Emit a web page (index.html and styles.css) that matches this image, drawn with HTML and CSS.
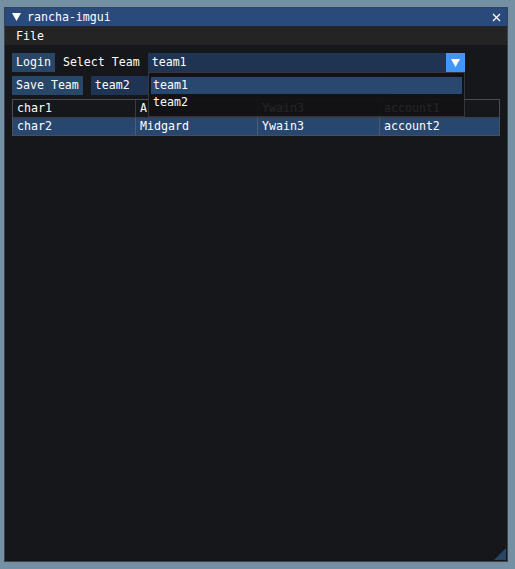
FILE: index.html
```html
<!DOCTYPE html>
<html>
<head>
<meta charset="utf-8">
<link rel="stylesheet" href="styles.css">
</head>
<body>
<div class="window">
  <div class="titlebar">
    <svg class="collapse" width="9" height="8" viewBox="0 0 9 8"><polygon points="0,0 9,0 4.5,8" fill="#fff"/></svg>
    <span class="title">rancha-imgui</span>
    <svg class="close" width="9" height="9" viewBox="0 0 9 9"><path d="M1 1 L8 8 M8 1 L1 8" stroke="#fff" stroke-width="1.3"/></svg>
  </div>
  <div class="menubar"><span class="menu-item">File</span></div>
  <div class="content">
    <div class="row">
      <div class="btn">Login</div>
      <span class="label">Select Team</span>
      <div class="combo">
        <span class="combo-text">team1</span>
        <div class="combo-arrow"><svg width="9" height="8" viewBox="0 0 9 8"><polygon points="0,0 9,0 4.5,8" fill="#fff"/></svg></div>
      </div>
    </div>
    <div class="row">
      <div class="btn">Save Team</div>
      <div class="input">team2</div>
    </div>
    <div class="table">
      <div class="tr">
        <div class="td">char1</div><div class="td">A</div><div class="td">Ywain3</div><div class="td">account1</div>
      </div>
      <div class="tr selected">
        <div class="td">char2</div><div class="td">Midgard</div><div class="td">Ywain3</div><div class="td">account2</div>
      </div>
    </div>
    <div class="popup">
      <div class="popup-item active">team1</div>
      <div class="popup-item">team2</div>
    </div>
  </div>
  <div class="grip"></div>
</div>
</body>
</html>
```
FILE: styles.css
```css
html, body {
  margin: 0;
  padding: 0;
}
body {
  background: #7590a2;
  width: 515px;
  height: 569px;
  overflow: hidden;
  font-family: "DejaVu Sans Mono", "Liberation Mono", monospace;
  font-size: 11.6px;
  color: #ffffff;
}
.window {
  position: relative;
  margin: 7px 0 0 4px;
  width: 504px;
  height: 555px;
  background: #16171a;
  box-sizing: border-box;
  border: 1px solid #3a4250;
  display: flex;
  flex-direction: column;
}
.titlebar {
  height: 18px;
  background: #294a7a;
  display: flex;
  align-items: center;
  padding: 0 0 0 7px;
  flex: none;
}
.collapse {
  margin-right: 6px;
}
.title {
  flex: 1;
  line-height: 18px;
}
.close {
  margin-right: 6px;
}
.menubar {
  height: 19px;
  background: #242424;
  display: flex;
  align-items: center;
  padding-left: 11px;
  flex: none;
}
.content {
  position: relative;
  padding: 8px 7px;
  display: flex;
  flex-direction: column;
  gap: 4px;
}
.row {
  display: flex;
  align-items: center;
  gap: 8px;
  height: 19px;
}
.btn {
  background: #274668;
  height: 19px;
  line-height: 19px;
  padding: 0 4px;
}
.label {
  line-height: 19px;
}
.combo {
  width: 317px;
  height: 19px;
  background: #1f3352;
  display: flex;
  align-items: center;
}
.combo-text {
  flex: 1;
  padding-left: 4px;
  line-height: 19px;
}
.combo-arrow {
  width: 19px;
  height: 19px;
  background: #4296fa;
  display: flex;
  align-items: center;
  justify-content: center;
}
.input {
  width: 300px;
  height: 19px;
  line-height: 19px;
  background: #1f3352;
  padding-left: 4px;
  box-sizing: border-box;
}
.table {
  width: 488px;
  border: 1px solid #4a4d55;
  box-sizing: border-box;
}
.tr {
  display: grid;
  grid-template-columns: 122px 122px 122px 1fr;
  height: 17px;
}
.tr + .tr {
  border-top: 1px solid #3a3c42;
}
.td {
  padding-left: 4px;
  line-height: 17px;
  border-left: 1px solid #3a3c42;
}
.td:first-child {
  border-left: none;
}
.selected {
  background: #28476f;
}
.selected .td {
  border-left-color: #4a5c78;
}
.popup {
  position: absolute;
  left: 143px;
  top: 27px;
  width: 317px;
  height: 45px;
  box-sizing: border-box;
  background: rgba(18, 18, 20, 0.93);
  border: 1px solid #35373d;
  padding: 4px 2px 0 2px;
}
.popup-item {
  height: 17px;
  line-height: 17px;
  padding-left: 2px;
}
.popup-item.active {
  background: #294870;
}
.grip {
  position: absolute;
  right: 1px;
  bottom: 1px;
  width: 0;
  height: 0;
  border-left: 12px solid transparent;
  border-bottom: 12px solid #2a4463;
}
```
